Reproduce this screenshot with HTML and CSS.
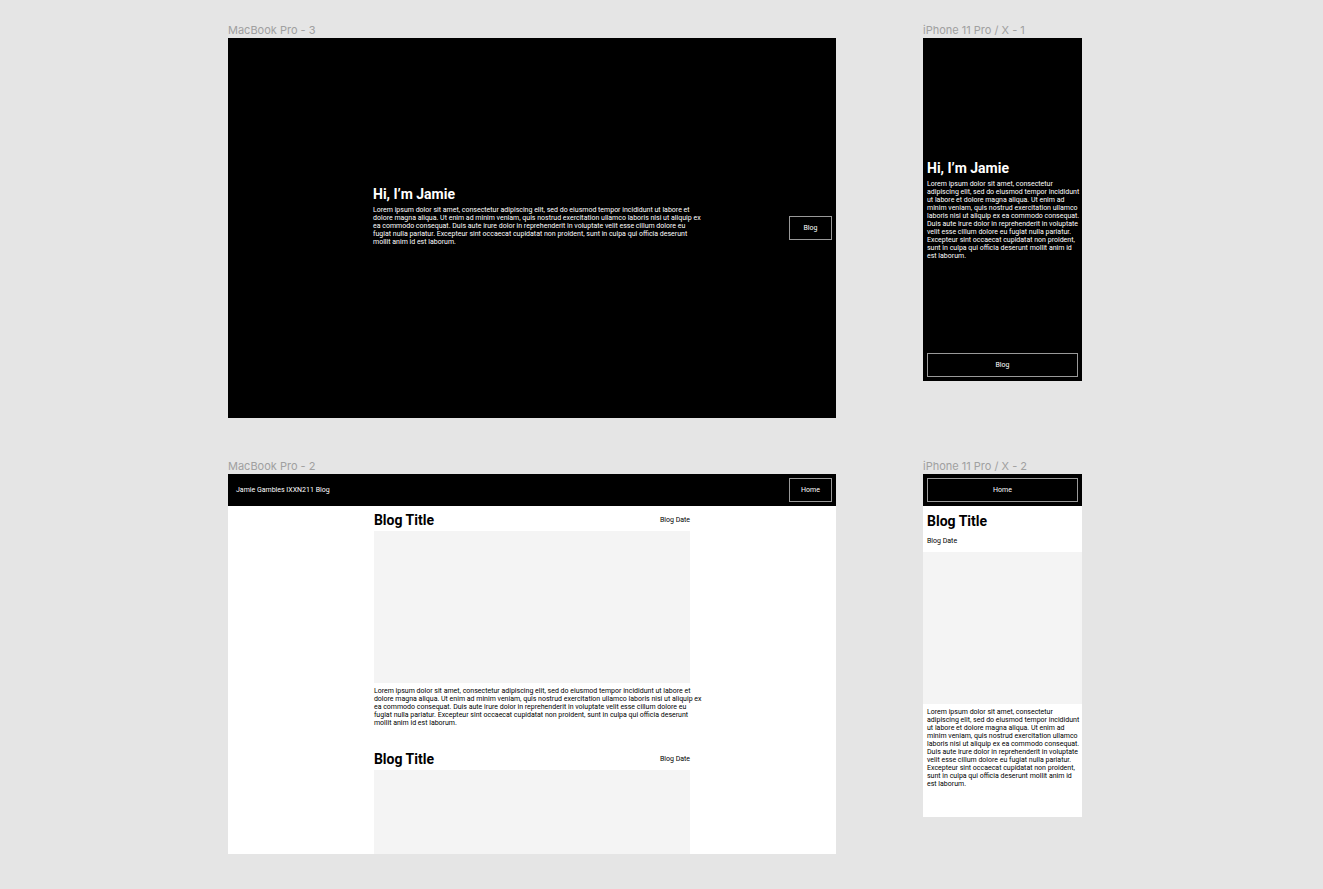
FILE: index.html
```html
<!DOCTYPE html>
<html lang="en">
<head>
<meta charset="utf-8">
<title>Blog wireframes</title>
<link rel="stylesheet" href="styles.css">
</head>
<body>
<main class="canvas">
  <section class="board wide">
    <h2 class="label">MacBook Pro - 3</h2>
    <div class="frame desktop hero">
      <div class="copy">
        <h1 class="title">Hi, I’m Jamie</h1>
        <p class="text">Lorem ipsum dolor sit amet, consectetur adipiscing elit, sed do eiusmod tempor incididunt ut labore et<br>dolore magna aliqua. Ut enim ad minim veniam, quis nostrud exercitation ullamco laboris nisi ut aliquip ex<br>ea commodo consequat. Duis aute irure dolor in reprehenderit in voluptate velit esse cillum dolore eu<br>fugiat nulla pariatur. Excepteur sint occaecat cupidatat non proident, sunt in culpa qui officia deserunt<br>mollit anim id est laborum.</p>
      </div>
      <button class="button" type="button">Blog</button>
    </div>
  </section>

  <section class="board narrow">
    <h2 class="label">iPhone 11 Pro / X - 1</h2>
    <div class="frame phone hero">
      <div class="copy">
        <h1 class="title">Hi, I’m Jamie</h1>
        <p class="text">Lorem ipsum dolor sit amet, consectetur<br>adipiscing elit, sed do eiusmod tempor incididunt<br>ut labore et dolore magna aliqua. Ut enim ad<br>minim veniam, quis nostrud exercitation ullamco<br>laboris nisi ut aliquip ex ea commodo consequat.<br>Duis aute irure dolor in reprehenderit in voluptate<br>velit esse cillum dolore eu fugiat nulla pariatur.<br>Excepteur sint occaecat cupidatat non proident,<br>sunt in culpa qui officia deserunt mollit anim id<br>est laborum.</p>
      </div>
      <button class="button" type="button">Blog</button>
    </div>
  </section>

  <section class="board wide">
    <h2 class="label">MacBook Pro - 2</h2>
    <div class="frame desktop blog">
      <header class="bar">
        <span class="brand">Jamie Gambles IXXN211 Blog</span>
        <button class="button" type="button">Home</button>
      </header>
      <article class="post">
        <div class="heading">
          <h1 class="title">Blog Title</h1>
          <span class="date">Blog Date</span>
        </div>
        <div class="picture"></div>
        <p class="text">Lorem ipsum dolor sit amet, consectetur adipiscing elit, sed do eiusmod tempor incididunt ut labore et<br>dolore magna aliqua. Ut enim ad minim veniam, quis nostrud exercitation ullamco laboris nisi ut aliquip ex<br>ea commodo consequat. Duis aute irure dolor in reprehenderit in voluptate velit esse cillum dolore eu<br>fugiat nulla pariatur. Excepteur sint occaecat cupidatat non proident, sunt in culpa qui officia deserunt<br>mollit anim id est laborum.</p>
      </article>
      <article class="post">
        <div class="heading">
          <h1 class="title">Blog Title</h1>
          <span class="date">Blog Date</span>
        </div>
        <div class="picture"></div>
      </article>
    </div>
  </section>

  <section class="board narrow">
    <h2 class="label">iPhone 11 Pro / X - 2</h2>
    <div class="frame phone blog">
      <header class="bar">
        <button class="button" type="button">Home</button>
      </header>
      <article class="post">
        <div class="heading">
          <h1 class="title">Blog Title</h1>
          <span class="date">Blog Date</span>
        </div>
        <div class="picture"></div>
        <p class="text">Lorem ipsum dolor sit amet, consectetur<br>adipiscing elit, sed do eiusmod tempor incididunt<br>ut labore et dolore magna aliqua. Ut enim ad<br>minim veniam, quis nostrud exercitation ullamco<br>laboris nisi ut aliquip ex ea commodo consequat.<br>Duis aute irure dolor in reprehenderit in voluptate<br>velit esse cillum dolore eu fugiat nulla pariatur.<br>Excepteur sint occaecat cupidatat non proident,<br>sunt in culpa qui officia deserunt mollit anim id<br>est laborum.</p>
      </article>
    </div>
  </section>
</main>
</body>
</html>
```
FILE: styles.css
```css
* {
  box-sizing: border-box;
}

body {
  margin: 0;
  background: #e5e5e5;
  color: #000;
  font: 7px/8px Roboto, "Liberation Sans", sans-serif;
}

.canvas {
  display: grid;
  grid-template-columns:
    minmax(0, 228fr) minmax(0, 608fr) minmax(0, 87fr)
    minmax(0, 159fr) minmax(0, 241fr);
  row-gap: 40px;
  align-items: start;
  padding: 22px 0 32px;
}

.wide {
  grid-column: 2;
}

.narrow {
  grid-column: 4;
}

.label {
  margin: 0;
  color: #a0a0a0;
  font: 400 11px/16px Inter, "Liberation Sans", sans-serif;
  white-space: nowrap;
}

.frame {
  overflow: hidden;
  background: #fff;
}

.desktop {
  aspect-ratio: 1440 / 900;
}

.phone {
  aspect-ratio: 159 / 343;
}

.title {
  margin: 0;
  font-size: 14px;
  font-weight: 700;
  line-height: 24px;
}

.text {
  margin: 0;
  white-space: nowrap;
}

.button {
  width: 43px;
  height: 24px;
  padding: 0;
  border: 1px solid #999;
  background: #000;
  color: #fff;
  font: inherit;
  text-align: center;
}

.hero {
  display: grid;
  padding: 4px;
  background: #000;
  color: #fff;
}

.desktop.hero {
  grid-template-columns: 1fr 53% 1fr;
  align-items: center;
}

.desktop .copy {
  grid-column: 2;
  padding-bottom: 28px;
}

.desktop.hero .button {
  justify-self: end;
}

.phone.hero {
  grid-template-columns: minmax(0, 1fr);
  grid-template-rows: 1fr auto 1fr;
}

.phone .copy {
  grid-row: 2;
  padding-bottom: 4px;
}

.phone .button {
  align-self: end;
  width: 100%;
}

.phone.hero .button {
  grid-row: 3;
}

.bar {
  display: flex;
  align-items: center;
  justify-content: space-between;
  height: 32px;
  padding: 0 4px;
  background: #000;
  color: #fff;
}

.brand {
  padding-left: 4px;
}

.heading {
  display: flex;
  align-items: center;
  justify-content: space-between;
  padding-top: 3px;
  height: 25px;
}

.picture {
  height: 152px;
  margin-bottom: 4px;
  background: #f4f4f4;
}

.desktop .post {
  width: 52%;
  margin: 0 auto 18px;
}

.phone .heading {
  flex-direction: column;
  align-items: flex-start;
  justify-content: flex-start;
  gap: 4px;
  height: 46px;
  padding: 3px 4px 0;
}

.phone .post .text {
  padding: 0 4px;
}

.phone .bar .button {
  align-self: center;
}
```
